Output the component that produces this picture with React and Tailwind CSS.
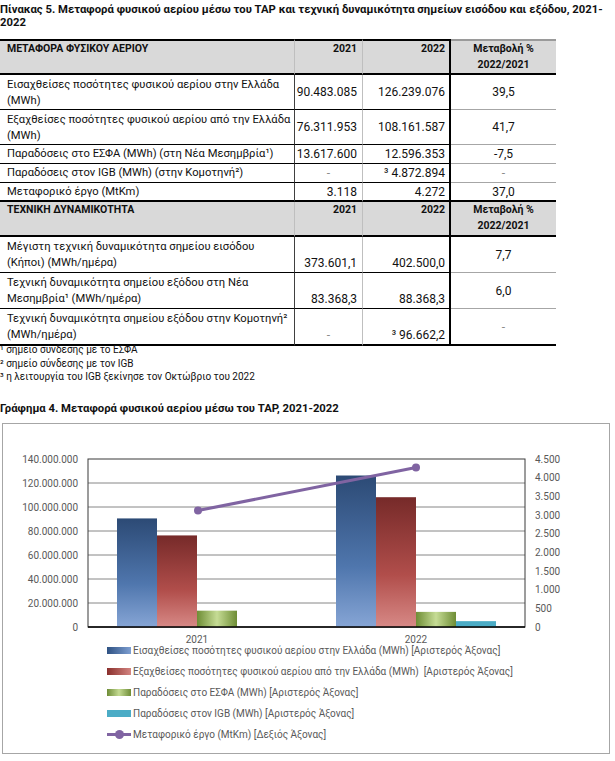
import React from 'react';

const c1 = 'w-[295px] shrink-0 pl-[7px] whitespace-nowrap';
const c2 = 'w-[68px] shrink-0 pr-[5px] text-right whitespace-nowrap';
const c3 = 'w-[88px] shrink-0 pr-[4px] text-right whitespace-nowrap';
const c4 = 'w-[105px] shrink-0 text-center whitespace-nowrap';

const Dash = () => <span className="text-[#8c8c8c]">-</span>;

function HeadRow({ title, top, h }) {
  return (
    <div className={`flex ${h} bg-[#d9d9d9] font-bold text-[10.5px] leading-[16px]`}>
      <div className={`${c1} border-r border-[#bfbfbf] border-t-2 border-b-2 border-t-black border-b-black ${top || ''}`}>{title}</div>
      <div className={`${c2} border-r border-[#bfbfbf] border-t-2 border-b-2 border-t-black border-b-black ${top || ''}`}>2021</div>
      <div className={`${c3} border-r-2 border-black border-t-2 border-b-2 ${top || ''}`}>2022</div>
      <div className={`${c4} border-t-2 border-b-2 border-t-[#9a9a9a] border-b-black ${top || ''}`}>
        Μεταβολή %<br />2022/2021
      </div>
    </div>
  );
}

function Row({ label, a, b, c, h, thick, bottomVals }) {
  const bb = thick ? 'border-b-2' : 'border-b';
  const v = bottomVals ? 'items-end pb-[1px]' : 'items-center';
  return (
    <div className={`flex ${h} leading-[16px]`}>
      <div className={`${c1} ${bb} border-black border-r border-r-[#404040] pt-[2px] text-[11.2px]`}>{label}</div>
      <div className={`${c2} ${bb} border-black border-r border-r-[#bfbfbf] flex ${v} justify-end`}>{a}</div>
      <div className={`${c3} ${bb} border-black border-r-2 flex ${v} justify-end`}>{b}</div>
      <div className={`${c4} ${bb} ${thick ? 'border-b-black' : 'border-b-[#a6a6a6]'} flex items-center justify-center`}>{c}</div>
    </div>
  );
}

function SmallRow({ label, a, b, c, thick }) {
  const bb = thick ? 'border-b-2' : 'border-b';
  return (
    <div className="flex h-[19px] leading-[18px]">
      <div className={`${c1} ${bb} border-black border-r border-r-[#404040] text-[11.2px]`}>{label}</div>
      <div className={`${c2} ${bb} border-black border-r border-r-[#bfbfbf]`}>{a}</div>
      <div className={`${c3} ${bb} border-black border-r-2`}>{b}</div>
      <div className={`${c4} ${bb} ${thick ? 'border-b-black' : 'border-b-[#a6a6a6]'}`}>{c}</div>
    </div>
  );
}

const legend = [
  { kind: 'blue', text: 'Εισαχθείσες ποσότητες φυσικού αερίου στην Ελλάδα (MWh) [Αριστερός Άξονας]' },
  { kind: 'red', text: 'Εξαχθείσες ποσότητες φυσικού αερίου από την Ελλάδα (MWh)  [Αριστερός Άξονας]' },
  { kind: 'green', text: 'Παραδόσεις στο ΕΣΦΑ (MWh) [Αριστερός Άξονας]' },
  { kind: 'cyan', text: 'Παραδόσεις στον IGB (MWh) [Αριστερός Άξονας]' },
  { kind: 'line', text: 'Μεταφορικό έργο (MtKm) [Δεξιός Άξονας]' },
];

const swatch = {
  blue: 'bg-gradient-to-r from-[#2f5283] to-[#7e9fd2]',
  red: 'bg-gradient-to-r from-[#8a2f2d] to-[#d48582]',
  green: 'bg-gradient-to-r from-[#6f8d36] via-[#c5db93] to-[#6f8d36]',
  cyan: 'bg-[#4bacc6]',
};

// plot geometry, in page coordinates
const PX = 88, PY = 458, PW = 437, PH = 168;
const yL = v => PY + PH - (v / 140000000) * PH;
const yR = v => PY + PH - (v / 4500) * PH;

const bars = [
  { x: 117, fill: 'url(#gBlue)', v: 90483085 },
  { x: 157, fill: 'url(#gRed)', v: 76311953 },
  { x: 197, fill: 'url(#gGreen)', v: 13617600 },
  { x: 336, fill: 'url(#gBlue)', v: 126239076 },
  { x: 376, fill: 'url(#gRed)', v: 108161587 },
  { x: 416, fill: 'url(#gGreen)', v: 12596353 },
  { x: 456, fill: '#4bacc6', v: 4872894 },
];

const leftTicks = ['0', '20.000.000', '40.000.000', '60.000.000', '80.000.000', '100.000.000', '120.000.000', '140.000.000'];
const rightTicks = ['0', '500', '1.000', '1.500', '2.000', '2.500', '3.000', '3.500', '4.000', '4.500'];

function Chart() {
  const p1 = { x: 198, y: yR(3118) };
  const p2 = { x: 416, y: yR(4272) };
  return (
    <svg width="606" height="217" className="block overflow-visible">
      <defs>
        <linearGradient id="gBlue" x1="0" y1="0" x2="0" y2="1">
          <stop offset="0" stopColor="#2c4a75" />
          <stop offset="0.6" stopColor="#4f76ad" />
          <stop offset="1" stopColor="#86a5d5" />
        </linearGradient>
        <linearGradient id="gRed" x1="0" y1="0" x2="0" y2="1">
          <stop offset="0" stopColor="#762a29" />
          <stop offset="0.6" stopColor="#b14e4b" />
          <stop offset="1" stopColor="#d78986" />
        </linearGradient>
        <linearGradient id="gGreen" x1="0" y1="0" x2="1" y2="0">
          <stop offset="0" stopColor="#6e8d35" />
          <stop offset="0.5" stopColor="#c6dc95" />
          <stop offset="1" stopColor="#6e8d35" />
        </linearGradient>
      </defs>
      <g transform="translate(-3,-423)">
        {[1, 2, 3, 4, 5, 6].map(i => (
          <line key={i} x1={PX} x2={PX + PW} y1={PY + i * 24} y2={PY + i * 24} stroke="#868686" strokeWidth="1" />
        ))}
        <rect x={PX} y={PY} width={PW} height={PH} fill="none" stroke="#3a3a3a" strokeWidth="1" />
        {bars.map((b, i) => (
          <rect key={i} x={b.x} y={yL(b.v)} width="40" height={PY + PH - yL(b.v)} fill={b.fill} />
        ))}
        <line x1={PX} x2={PX + PW} y1={PY + PH} y2={PY + PH} stroke="#000" strokeWidth="1.5" />
        <line x1={p1.x} y1={p1.y} x2={p2.x} y2={p2.y} stroke="#8064a2" strokeWidth="3" />
        <circle cx={p1.x} cy={p1.y} r="4" fill="#8064a2" />
        <circle cx={p2.x} cy={p2.y} r="4" fill="#8064a2" />
        <g fill="#595959" fontSize="10">
          {leftTicks.map((t, i) => (
            <text key={t} x="78" y={PY + PH - i * 24} dy="0.35em" textAnchor="end">{t}</text>
          ))}
          {rightTicks.map((t, i) => (
            <text key={t} x="535" y={PY + PH - i * (PH / 9)} dy="0.35em">{t}</text>
          ))}
          <text x="197" y="638" dy="0.35em" textAnchor="middle">2021</text>
          <text x="416" y="638" dy="0.35em" textAnchor="middle">2022</text>
        </g>
      </g>
    </svg>
  );
}

export default function App() {
  return (
    <div className="w-[615px] h-[761px] overflow-hidden bg-white text-[#111] font-[family-name:Roboto,'Noto_Sans',sans-serif] text-[12px]">
      <p className="pt-[3px] text-[11.3px] font-bold leading-[13px]">
        Πίνακας 5. Μεταφορά φυσικού αερίου μέσω του TAP και τεχνική δυναμικότητα σημείων εισόδου και εξόδου, 2021-
        <br />
        2022
      </p>

      <div className="mt-[10px] w-[556px]">
        <HeadRow h="h-[36px]" title="ΜΕΤΑΦΟΡΑ ΦΥΣΙΚΟΥ ΑΕΡΙΟΥ" />
        <Row h="h-[35px]" label={<>Εισαχθείσες ποσότητες φυσικού αερίου στην Ελλάδα<br />(MWh)</>} a="90.483.085" b="126.239.076" c="39,5" />
        <Row h="h-[35px]" label={<>Εξαχθείσες ποσότητες φυσικού αερίου από την Ελλάδα<br />(MWh)</>} a="76.311.953" b="108.161.587" c="41,7" />
        <SmallRow label="Παραδόσεις στο ΕΣΦΑ (MWh) (στη Νέα Μεσημβρία¹)" a="13.617.600" b="12.596.353" c="-7,5" />
        <SmallRow label="Παραδόσεις στον IGB (MWh) (στην Κομοτηνή²)" a={<span className="block text-center pl-[5px]"><Dash /></span>} b="³ 4.872.894" c={<Dash />} />
        <SmallRow thick label="Μεταφορικό έργο (MtKm)" a="3.118" b="4.272" c="37,0" />
        <HeadRow h="h-[35px]" title="ΤΕΧΝΙΚΗ ΔΥΝΑΜΙΚΟΤΗΤΑ" top="!border-t-0" />
        <Row bottomVals h="h-[36px]" label={<>Μέγιστη τεχνική δυναμικότητα σημείου εισόδου<br />(Κήποι) (MWh/ημέρα)</>} a="373.601,1" b="402.500,0" c="7,7" />
        <Row bottomVals h="h-[36px]" label={<>Τεχνική δυναμικότητα σημείου εξόδου στη Νέα<br />Μεσημβρία¹ (MWh/ημέρα)</>} a="83.368,3" b="88.368,3" c="6,0" />
        <Row bottomVals thick h="h-[37px]" label={<>Τεχνική δυναμικότητα σημείου εξόδου στην Κομοτηνή²<br />(MWh/ημέρα)</>} a={<span className="w-full text-center pl-[5px]"><Dash /></span>} b="³ 96.662,2" c={<Dash />} />
      </div>

      <div className="-mt-[3px] text-[10px] leading-[13.5px]">
        <p>¹ σημείο σύνδεσης με το ΕΣΦΑ</p>
        <p>² σημείο σύνδεσης με τον IGB</p>
        <p>³ η λειτουργία του IGB ξεκίνησε τον Οκτώβριο του 2022</p>
      </div>

      <p className="mt-[18px] text-[11.3px] font-bold leading-[13px]">
        Γράφημα 4. Μεταφορά φυσικού αερίου μέσω του TAP, 2021-2022
      </p>

      <div className="mt-[8px] ml-[2px] w-[608px] border border-[#a6a6a6]">
        <Chart />
        <div className="flex flex-col gap-[1px] pb-[8px] pl-[104px] text-[10px] text-[#595959]">
          {legend.map(l => (
            <div key={l.kind} className="flex h-[20px] items-center">
              {l.kind === 'line' ? (
                <span className="relative mr-[2px] h-[3px] w-[24px] bg-[#8064a2]">
                  <span className="absolute left-[8px] top-[-3px] h-[9px] w-[9px] rounded-full bg-[#8064a2]" />
                </span>
              ) : (
                <span className={`mr-[2px] h-[7px] w-[24px] ${swatch[l.kind]}`} />
              )}
              <span className="whitespace-pre">{l.text}</span>
            </div>
          ))}
        </div>
      </div>
    </div>
  );
}
